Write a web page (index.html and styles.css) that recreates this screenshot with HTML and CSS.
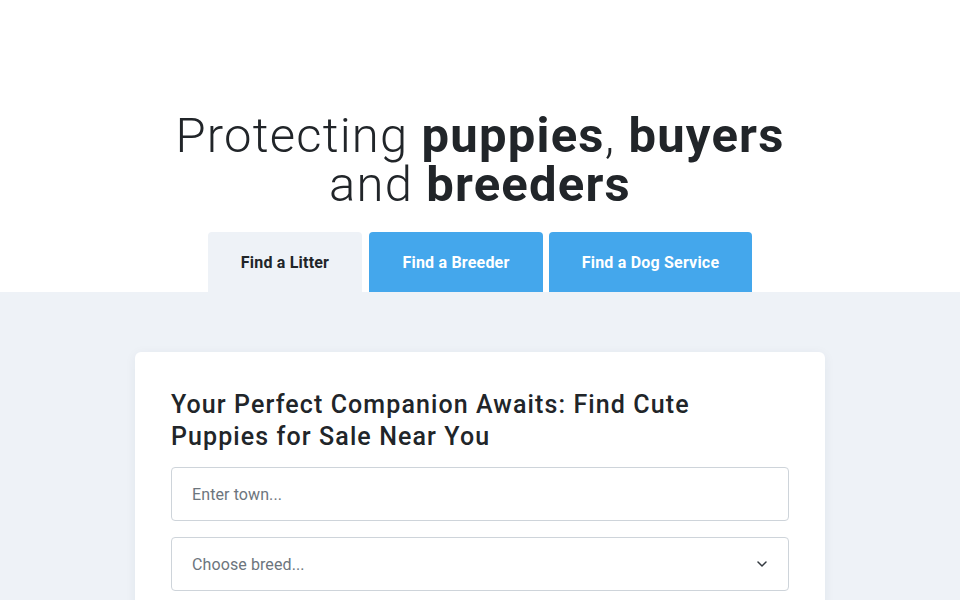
FILE: index.html
```html
<!DOCTYPE html>
<html lang="en">
<head>
<meta charset="utf-8">
<title>Find a Litter</title>
<link rel="stylesheet" href="styles.css">
</head>
<body>
<header class="hero">
  <h1 class="hero-title">Protecting <strong>puppies</strong>, <strong>buyers</strong><br>and <strong>breeders</strong></h1>
  <nav class="tabs">
    <a class="tab tab-active" href="#">Find a Litter</a>
    <a class="tab" href="#">Find a Breeder</a>
    <a class="tab" href="#">Find a Dog Service</a>
  </nav>
</header>
<main class="content">
  <section class="card">
    <h2 class="card-title">Your Perfect Companion Awaits: Find Cute Puppies for Sale Near You</h2>
    <form class="search">
      <input class="field" type="text" placeholder="Enter town...">
      <div class="field select">
        <span class="select-text">Choose breed...</span>
        <svg class="chevron" width="10" height="6" viewBox="0 0 10 6" aria-hidden="true"><path d="M1 1 L5 5 L9 1" fill="none" stroke="#343a40" stroke-width="1.5" stroke-linecap="round" stroke-linejoin="round"/></svg>
      </div>
    </form>
  </section>
</main>
</body>
</html>
```
FILE: styles.css
```css
* { box-sizing: border-box; }
html, body { margin: 0; padding: 0; }
body {
  font-family: Roboto, "Liberation Sans", sans-serif;
  color: #212529;
  background: #eef2f7;
  overflow: hidden;
}
.hero {
  background: #ffffff;
  padding-top: 111px;
  display: flex;
  flex-direction: column;
  align-items: center;
}
.hero-title {
  margin: 0 0 23px;
  font-size: 49px;
  line-height: 49px;
  font-weight: 300;
  letter-spacing: 1.2px;
  text-align: center;
  color: #212529;
}
.hero-title strong { font-weight: 700; }
.tabs {
  display: flex;
  gap: 6px;
}
.tab {
  display: flex;
  align-items: center;
  justify-content: center;
  height: 60px;
  border-radius: 4px 4px 0 0;
  background: #44a7ec;
  color: #ffffff;
  font-size: 16px;
  font-weight: 700;
  letter-spacing: 0.2px;
  text-decoration: none;
}
.tab:nth-child(1) { width: 154px; }
.tab:nth-child(2) { width: 174px; margin-left: 1px; }
.tab:nth-child(3) { width: 203px; }
.tab-active {
  background: #eef2f7;
  color: #212529;
}
.content {
  padding-top: 60px;
  display: flex;
  justify-content: center;
}
.card {
  width: 690px;
  background: #ffffff;
  border-radius: 6px;
  box-shadow: 0 2px 12px rgba(30, 50, 80, 0.06);
  padding: 37px 36px 40px;
}
.card-title {
  margin: 0 0 14px;
  font-size: 25px;
  line-height: 32px;
  font-weight: 500;
  letter-spacing: 1.1px;
  color: #212529;
  max-width: 560px;
}
.search {
  display: flex;
  flex-direction: column;
  gap: 16px;
}
.field {
  width: 100%;
  height: 54px;
  border: 1px solid #ced4da;
  border-radius: 4px;
  padding: 0 20px;
  font-family: inherit;
  font-size: 16px;
  letter-spacing: 0.1px;
  color: #495057;
  background: #ffffff;
  outline: none;
}
.field::placeholder { color: #6c757d; }
.select {
  display: flex;
  align-items: center;
  justify-content: space-between;
  color: #6c757d;
}
.chevron { margin-right: 1px; }
```
